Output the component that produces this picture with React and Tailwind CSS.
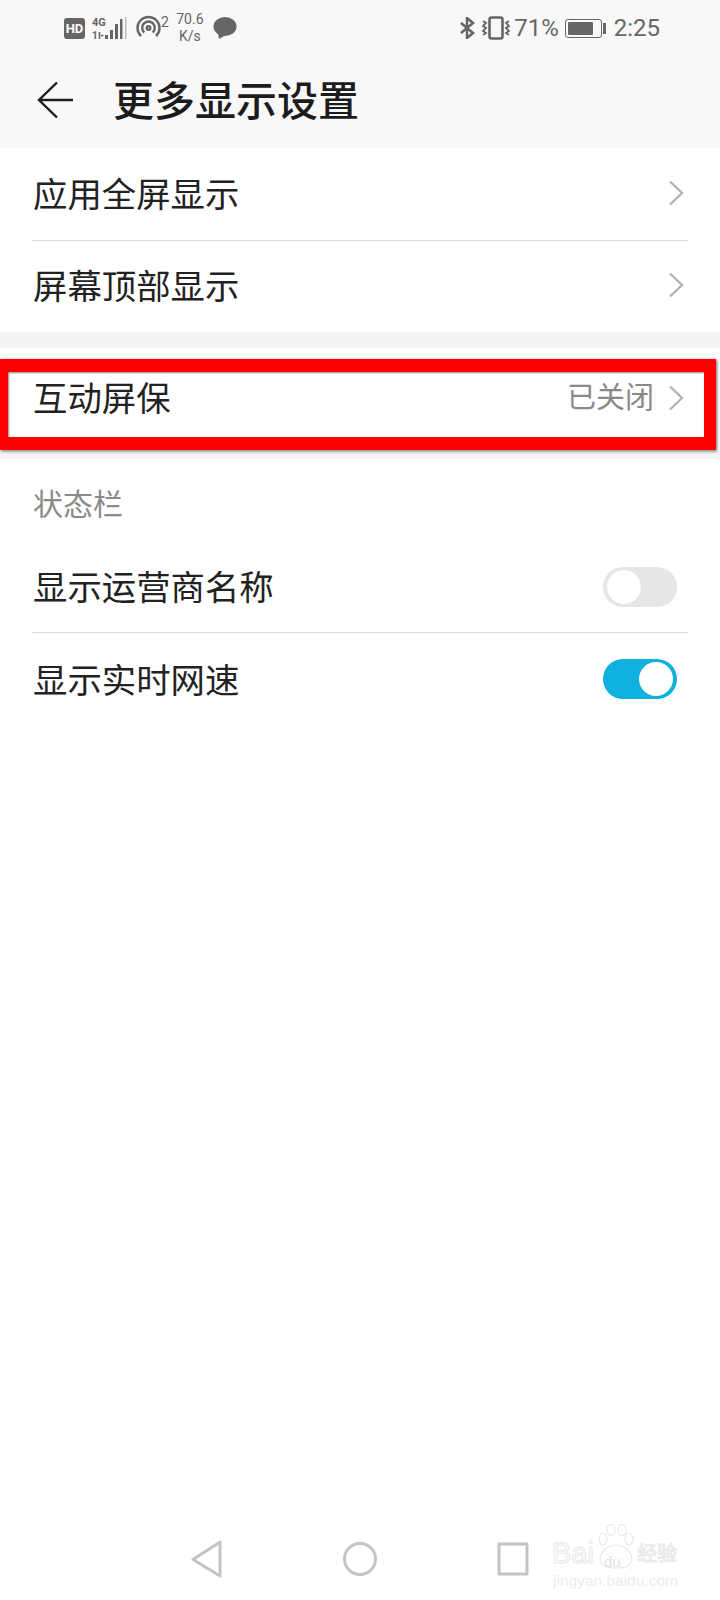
const font = { fontFamily: '"Roboto", "Noto Sans CJK SC", sans-serif' }
const latin = { fontFamily: '"Liberation Sans", sans-serif' }

function StatusLeft() {
  return (
    <div className="flex items-center">
      {/* HD */}
      <div className="w-[21px] h-[21px] rounded-[3px] bg-[#666] text-white text-[13px] font-bold leading-[21px] text-center">HD</div>
      {/* 4G + signal */}
      <svg width="35" height="24" viewBox="0 0 35 24" className="ml-[7px]">
        <text x="0" y="10" fontSize="11" fontWeight="700" fill="#666" fontFamily="Roboto">4G</text>
        <text x="0" y="23" fontSize="10" fontWeight="700" fill="#666" fontFamily="Roboto">1</text>
        <path d="M7.5 16v7M9 19.5h2.5" stroke="#666" strokeWidth="1.6" />
        <rect x="13" y="19" width="3" height="4" fill="#666" />
        <rect x="18" y="14" width="3" height="9" fill="#666" />
        <rect x="23" y="8" width="3" height="15" fill="#666" />
        <rect x="28" y="3" width="2.5" height="20" fill="#666" />
        <rect x="33" y="1" width="1.5" height="22" fill="#bbb" />
      </svg>
      {/* hotspot */}
      <svg width="25" height="26" viewBox="0 0 25 26" fill="none" stroke="#666" strokeWidth="2.4" className="ml-[9px]">
        <path d="M5 21A11 11 0 1 1 20 21" />
        <path d="M8.3 17.5A6.3 6.3 0 1 1 16.7 17.5" />
        <circle cx="12.5" cy="13" r="1.8" />
      </svg>
      <span className="text-[14px] leading-none text-[#666] mb-[12px]">2</span>
      <div className="ml-[6px] w-[30px] flex flex-col items-center text-[14px] leading-[17px] text-[#666]">
        <span>70.6</span>
        <span>K/s</span>
      </div>
      {/* message */}
      <svg width="24" height="24" viewBox="0 0 24 24" className="ml-[8px]">
        <ellipse cx="12" cy="10.5" rx="11.5" ry="9.5" fill="#666" />
        <path d="M5 16l1 7 7-4z" fill="#666" />
      </svg>
    </div>
  )
}

function StatusRight() {
  return (
    <div className="flex items-center">
      <svg width="15" height="22" viewBox="0 0 15 22" fill="none" stroke="#666" strokeWidth="2.6">
        <path d="M1 6l12 10-6 5V1l6 5L1 16" />
      </svg>
      <svg width="28" height="24" viewBox="0 0 28 24" fill="none" stroke="#666" className="ml-[7px]">
        <rect x="7.5" y="1.5" width="13" height="21" rx="2" strokeWidth="2.6" />
        <path d="M1 5l3 2-3 3 3 2-3 3 3 2-3 2M27 5l-3 2 3 3-3 2 3 3-3 2 3 2" strokeWidth="1.8" />
      </svg>
      <span className="ml-[4px] text-[24px] leading-none text-[#666]">71%</span>
      <div className="ml-[6px] flex items-center">
        <div className="w-[37px] h-[19px] rounded-[3px] border border-[#666] p-[2px] pr-[8px]">
          <div className="w-full h-full bg-[#666] rounded-[1px]" />
        </div>
        <div className="ml-[1px] w-[3px] h-[11px] bg-[#666]" />
      </div>
      <span className="ml-[8px] text-[24px] leading-none text-[#666]">2:25</span>
    </div>
  )
}

function Chevron() {
  return (
    <svg width="16" height="26" viewBox="0 0 16 26" fill="none" stroke="#b3b3b3" strokeWidth="2.4" className="mb-[3px]">
      <path d="M2 1.5L14 13 2 24.5" />
    </svg>
  )
}

function Row({ label, value, h, divider, textClass = "pt-[2px]" }) {
  return (
    <div className={`relative flex items-center pl-[33px] pr-[36px] ${h}`}>
      <span className={`flex-1 text-[34.4px] leading-none text-[#222] ${textClass}`}>{label}</span>
      {value && <span className="text-[29px] leading-none text-[#8a8a8a] mr-[14px] pb-[2px]">{value}</span>}
      <Chevron />
      {divider && <div className="absolute left-[32px] right-[32px] bottom-0 h-px bg-[#d9d9d9]" />}
    </div>
  )
}

function ToggleRow({ label, on, divider, h, textClass }) {
  return (
    <div className={`relative flex items-center pl-[33px] pr-[43px] ${h}`}>
      <span className={`flex-1 text-[34.4px] leading-none text-[#222] ${textClass}`}>{label}</span>
      <div className={`w-[74px] h-[40px] rounded-full px-[4px] py-[3px] flex ${on ? "bg-[#0fb1de] justify-end" : "bg-[#e6e6e6] justify-start"}`}>
        <div className="w-[34px] h-[34px] rounded-full bg-white" />
      </div>
      {divider && <div className="absolute left-[32px] right-[32px] bottom-0 h-px bg-[#d9d9d9]" />}
    </div>
  )
}

export default function App() {
  return (
    <div className="relative w-[720px] h-[1600px] bg-white flex flex-col overflow-hidden" style={font}>
      {/* Header */}
      <div className="bg-[#f8f8f8] h-[148px] shrink-0">
        <div className="h-[56px] pl-[64px] pr-[60px] flex items-center justify-between">
          <StatusLeft />
          <StatusRight />
        </div>
        <div className="flex items-center h-[92px] pl-[37px]">
          <svg width="36" height="38" viewBox="0 0 36 38" fill="none" stroke="#1c1c1c" strokeWidth="2.4" className="mb-[4px]">
            <path d="M20 1.5L2 19l18 17.5M2 19h34" />
          </svg>
          <span className="ml-[40px] text-[41px] leading-none font-medium text-[#1c1c1c]">更多显示设置</span>
        </div>
      </div>

      <Row label="应用全屏显示" h="h-[93px]" divider />
      <Row label="屏幕顶部显示" h="h-[91px]" />
      <div className="h-[16px] bg-[#f3f3f3]" />
      <Row label="互动屏保" value="已关闭" h="h-[103px]" textClass="pb-[1px]" />
      <div className="h-[8px] bg-[#f3f3f3]" />

      <div className="h-[82px] pl-[33px] pt-[10px] flex items-center text-[30px] leading-none text-[#8a8a8a]">状态栏</div>
      <ToggleRow label="显示运营商名称" h="h-[92px]" textClass="pt-[2px]" divider />
      <ToggleRow label="显示实时网速" on h="h-[91px]" textClass="pt-[5px]" />

      {/* Red highlight */}
      <div className="absolute left-0 top-[359px] w-[716px] h-[91px] border-y-[13px] border-r-[12px] border-l-[8px] border-[#fe0000] shadow-[1px_1px_3px_rgba(0,0,0,0.6),inset_1px_1px_2px_rgba(0,0,0,0.45)]" />

      {/* Nav bar */}
      <div className="mt-auto h-[76px] pb-[6px] flex items-center justify-center gap-[108px]">
        <svg width="32" height="38" viewBox="0 0 32 38" fill="none" stroke="#c4c4c4" strokeWidth="3" strokeLinejoin="round" className="mr-[12px]">
          <path d="M29 2v34L2 19.5z" />
        </svg>
        <svg width="34" height="34" viewBox="0 0 34 34" fill="none" stroke="#c4c4c4" strokeWidth="3">
          <circle cx="17" cy="17" r="15.5" />
        </svg>
        <svg width="32" height="34" viewBox="0 0 32 34" fill="none" stroke="#c4c4c4" strokeWidth="3" strokeLinejoin="round" className="ml-[12px]">
          <rect x="2" y="2" width="28" height="30" />
        </svg>
      </div>

      {/* Watermark */}
      <div className="absolute left-[552px] top-[1522px] w-[136px] h-[70px] text-white">
        <svg width="38" height="46" viewBox="0 0 38 46" fill="none" stroke="#e8e8e8" strokeWidth="1.2" className="absolute left-[45px] top-[2px]">
          <ellipse cx="6" cy="15" rx="4" ry="6" />
          <ellipse cx="14" cy="6" rx="4" ry="5.5" />
          <ellipse cx="25" cy="6" rx="4" ry="5.5" />
          <ellipse cx="32" cy="15" rx="4" ry="6" />
          <path d="M3 35c0-7 8-14 16-14s16 7 16 14c0 7-8 9-16 9s-16-2-16-9z" />
        </svg>
        <span className="absolute left-0 top-[17px] text-[29px] leading-none [-webkit-text-stroke:1px_#e8e8e8]" style={latin}>Bai</span>
        <span className="absolute left-[52px] top-[32px] text-[15px] leading-none text-[#e2e2e2]" style={latin}>du</span>
        <span className="absolute left-[85px] top-[22px] text-[20px] leading-none [-webkit-text-stroke:1px_#e8e8e8]">经验</span>
        <span className="absolute left-[1px] top-[51px] text-[15.5px] leading-none text-[#ececec]" style={latin}>jingyan.baidu.com</span>
      </div>
    </div>
  )
}
